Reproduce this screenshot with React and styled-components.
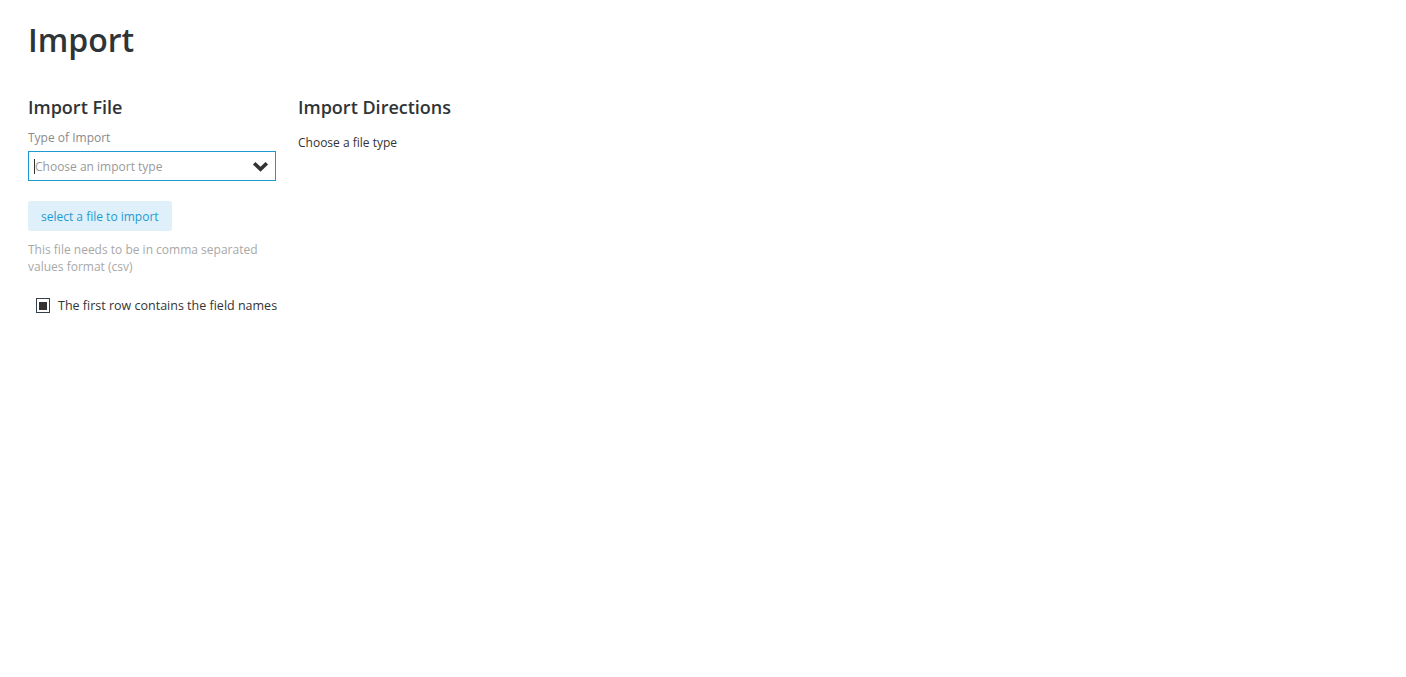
import React from "react";
import styled, { createGlobalStyle } from "styled-components";

const Global = createGlobalStyle`
  html, body { margin: 0; padding: 0; background: #fff; }
  body { font-family: "Open Sans", "Liberation Sans", sans-serif; color: #333; }
  * { box-sizing: border-box; }
`;

const Page = styled.div`
  padding: 17px 28px;
`;

const Title = styled.h1`
  margin: 0 0 31px;
  font-size: 32px;
  font-weight: 600;
  line-height: 46px;
  color: #2f3437;
`;

const Columns = styled.div`
  display: flex;
  gap: 22px;
  align-items: flex-start;
`;

const Column = styled.section`
  display: flex;
  flex-direction: column;
  width: ${(p) => p.$width || "auto"};
`;

const Heading = styled.h2`
  margin: 0 0 ${(p) => p.$gap || "9px"};
  font-size: 18px;
  font-weight: 600;
  line-height: 26px;
  color: #2f3437;
`;

const Label = styled.label`
  font-size: 12px;
  line-height: 18px;
  color: #8a8a8a;
  margin-bottom: 4px;
`;

const SelectBox = styled.div`
  display: flex;
  align-items: center;
  height: 30px;
  border: 1px solid #1d9bd1;
  padding: 0 6px 0 5px;
  font-size: 12px;
  color: #9a9a9a;
`;

const Caret = styled.span`
  width: 1px;
  height: 15px;
  background: #333;
`;

const Placeholder = styled.span`
  flex: 1;
`;

const Chevron = styled.svg`
  width: 17px;
  height: 11px;
  margin-top: 1px;
  flex-shrink: 0;
`;

const FileButton = styled.button`
  align-self: flex-start;
  margin-top: 20px;
  height: 30px;
  padding: 0 13px;
  border: none;
  border-radius: 2px;
  background: #dff0fa;
  color: #1d9bd1;
  font-family: inherit;
  font-size: 12px;
`;

const Hint = styled.p`
  margin: 10px 0 0;
  font-size: 12px;
  line-height: 17px;
  color: #a8a8a8;
`;

const CheckRow = styled.label`
  display: flex;
  align-items: center;
  gap: 8px;
  margin: 22px 0 0 8px;
  font-size: 12.5px;
  color: #333;
  white-space: nowrap;
`;

const CheckBox = styled.span`
  flex-shrink: 0;
  width: 14px;
  height: 15px;
  border: 1px solid #34404c;
  display: flex;
  align-items: center;
  justify-content: center;
  &::after {
    content: "";
    width: 8px;
    height: 8px;
    background: #333;
  }
`;

const Body = styled.p`
  margin: 0;
  font-size: 12px;
  line-height: 18px;
  color: #333;
`;

export default function App() {
  return (
    <>
      <Global />
      <Page>
        <Title>Import</Title>
        <Columns>
          <Column $width="248px">
            <Heading>Import File</Heading>
            <Label>Type of Import</Label>
            <SelectBox>
              <Caret />
              <Placeholder>Choose an import type</Placeholder>
              <Chevron viewBox="0 0 17 11">
                <path
                  d="M2.2 2.2 L8.5 8.3 L14.8 2.2"
                  fill="none"
                  stroke="#333"
                  strokeWidth="3.6"
                  strokeLinejoin="miter"
                />
              </Chevron>
            </SelectBox>
            <FileButton>select a file to import</FileButton>
            <Hint>This file needs to be in comma separated values format (csv)</Hint>
            <CheckRow>
              <CheckBox />
              The first row contains the field names
            </CheckRow>
          </Column>
          <Column>
            <Heading $gap="14px">Import Directions</Heading>
            <Body>Choose a file type</Body>
          </Column>
        </Columns>
      </Page>
    </>
  );
}
